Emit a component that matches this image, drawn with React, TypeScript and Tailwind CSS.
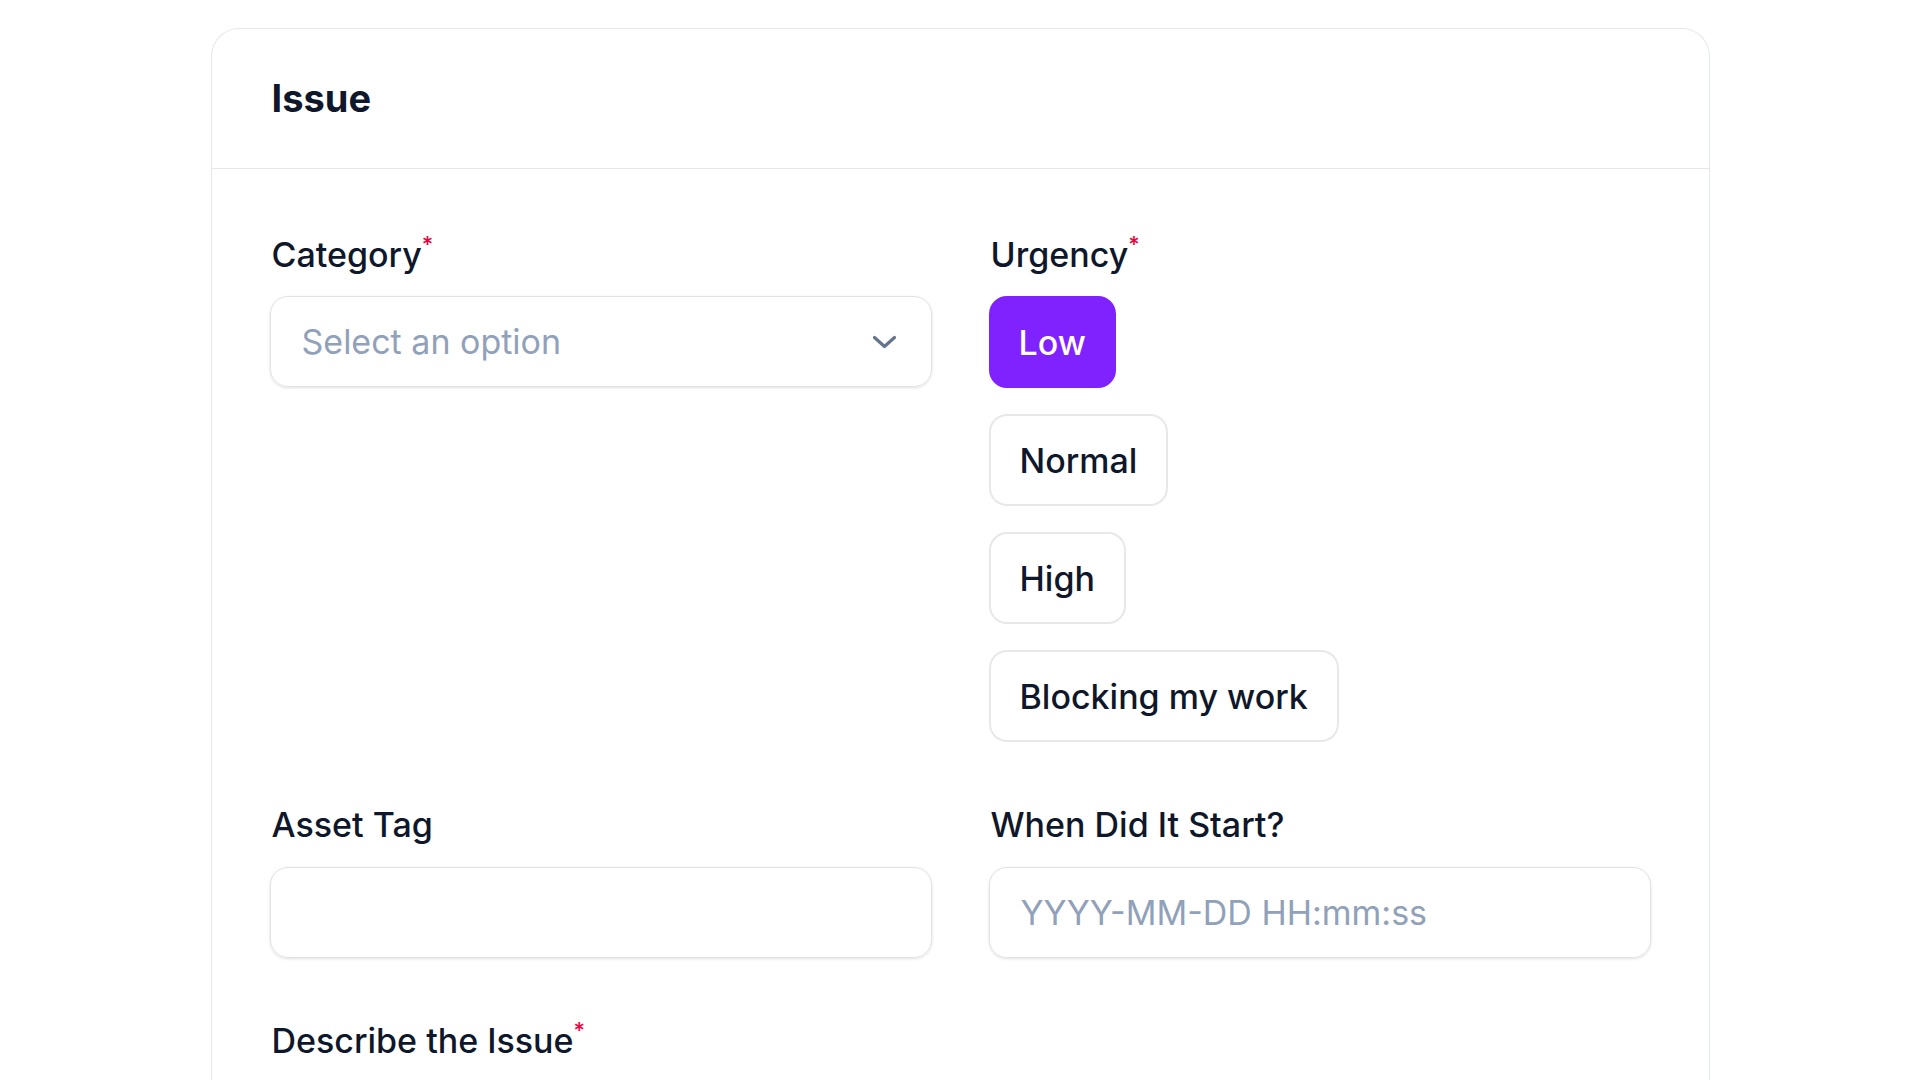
import React from "react";

const font = { fontFamily: "Inter, 'Noto Sans', sans-serif" };

const Label = ({ children, required }: { children: React.ReactNode; required?: boolean }) => (
  <div className="h-[40px] leading-[40px] pl-[2px] text-[34px] font-medium text-[#0f172a] whitespace-nowrap">
    {children}
    {required && <sup className="text-rose-600 text-[22px] relative -top-[15px]">*</sup>}
  </div>
);

const urgencies = ["Low", "Normal", "High", "Blocking my work"];

export default function App() {
  const [urgency, setUrgency] = React.useState("Low");

  return (
    <div className="min-h-screen bg-white pt-[28px]" style={font}>
      <div className="mx-auto w-[1499px] rounded-t-[28px] border border-b-0 border-[#e5e7eb] bg-white min-h-[1060px]">
        {/* header */}
        <div className="h-[140px] flex items-center px-[60px] border-b border-[#e2e8f0]">
          <h2 className="text-[38px] font-bold text-[#0f172a]">Issue</h2>
        </div>

        {/* form */}
        <div className="px-[58px] pt-[66px] grid grid-cols-2 gap-x-[57px] gap-y-[63px]">
          <div className="flex flex-col gap-[21px]">
            <Label required>Category</Label>
            <div className="h-[91px] rounded-[18px] border border-[#e2e2e4] shadow-[0_1px_3px_rgba(0,0,0,0.12)] flex items-center justify-between pl-[31px] pr-[34px] cursor-pointer">
              <span className="text-[34px] text-slate-400">Select an option</span>
              <svg width="25" height="14" viewBox="0 0 25 14" fill="none" stroke="#64748b" strokeWidth="3.2" strokeLinecap="round" strokeLinejoin="round">
                <path d="M2.5 2.5 L12.5 11.5 L22.5 2.5" />
              </svg>
            </div>
          </div>

          <div className="flex flex-col gap-[21px]">
            <Label required>Urgency</Label>
            <div className="flex flex-col items-start gap-[26px]">
              {urgencies.map((u) => (
                <button
                  key={u}
                  onClick={() => setUrgency(u)}
                  className={
                    u === urgency
                      ? "h-[92px] px-[28px] rounded-[18px] border-2 border-violet-600 bg-violet-600 text-white text-[34px] font-medium"
                      : "h-[92px] px-[29px] rounded-[18px] border-2 border-[#e8e8ea] bg-white text-[#0f172a] text-[34px] font-medium"
                  }
                >
                  {u}
                </button>
              ))}
            </div>
          </div>

          <div className="flex flex-col gap-[22px]">
            <Label>Asset Tag</Label>
            <input className="h-[91px] rounded-[18px] border border-[#e2e2e4] shadow-[0_1px_3px_rgba(0,0,0,0.12)] px-[31px] text-[34px] outline-none" />
          </div>

          <div className="flex flex-col gap-[22px]">
            <Label>When Did It Start?</Label>
            <input
              placeholder="YYYY-MM-DD HH:mm:ss"
              className="h-[91px] rounded-[18px] border border-[#e2e2e4] shadow-[0_1px_3px_rgba(0,0,0,0.12)] px-[31px] text-[34px] outline-none placeholder:text-slate-400"
            />
          </div>

          <div className="col-span-2">
            <Label required>Describe the Issue</Label>
          </div>
        </div>
      </div>
    </div>
  );
}
